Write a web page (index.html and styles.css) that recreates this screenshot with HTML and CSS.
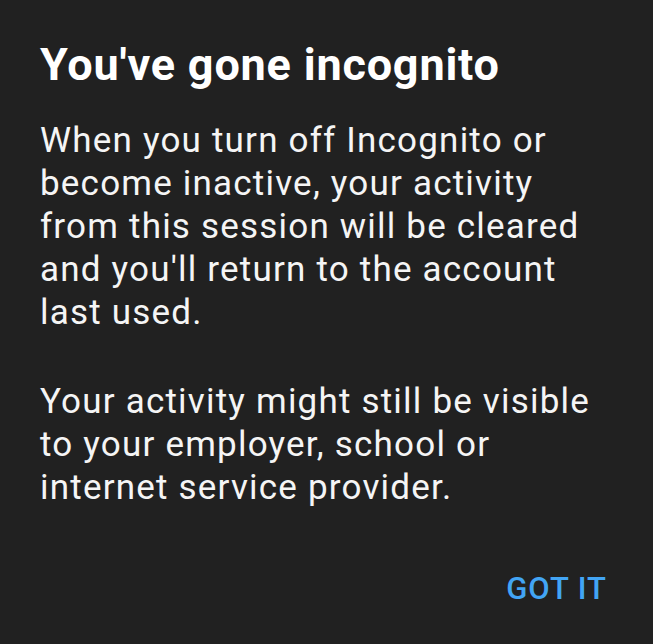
FILE: index.html
```html
<!DOCTYPE html>
<html lang="en">
<head>
<meta charset="utf-8">
<title>You've gone incognito</title>
<link rel="stylesheet" href="styles.css">
</head>
<body>
<div class="dialog">
  <h1 class="title">You've gone incognito</h1>
  <div class="content">
    <p class="para">When you turn off Incognito or become inactive, your activity from this session will be cleared and you'll return to the account last used.</p>
    <p class="para">Your activity might still be visible to your employer, school or internet service provider.</p>
  </div>
  <div class="actions">
    <button class="btn">GOT IT</button>
  </div>
</div>
</body>
</html>
```
FILE: styles.css
```css
html, body {
  margin: 0;
  padding: 0;
  background: #212121;
}
body {
  font-family: Roboto, "Noto Sans", "Liberation Sans", sans-serif;
  color: #ffffff;
}
.dialog {
  width: 653px;
  height: 644px;
  box-sizing: border-box;
  padding: 38px 46px 0 40px;
  display: flex;
  flex-direction: column;
}
.title {
  margin: 0;
  font-size: 45px;
  line-height: 53px;
  font-weight: 700;
  letter-spacing: 0.8px;
  color: #ffffff;
}
.content {
  margin-top: 28px;
  margin-right: 9px;
  display: flex;
  flex-direction: column;
  gap: 46px;
}
.para {
  margin: 0;
  font-size: 35px;
  line-height: 43px;
  font-weight: 400;
  letter-spacing: 1.2px;
  color: #f5f5f5;
}
.actions {
  display: flex;
  justify-content: flex-end;
  margin-top: 62px;
}
.btn {
  background: none;
  border: none;
  padding: 0;
  font-family: inherit;
  font-size: 31px;
  line-height: 36px;
  font-weight: 500;
  letter-spacing: 1px;
  color: #42a5f5;
}
```
